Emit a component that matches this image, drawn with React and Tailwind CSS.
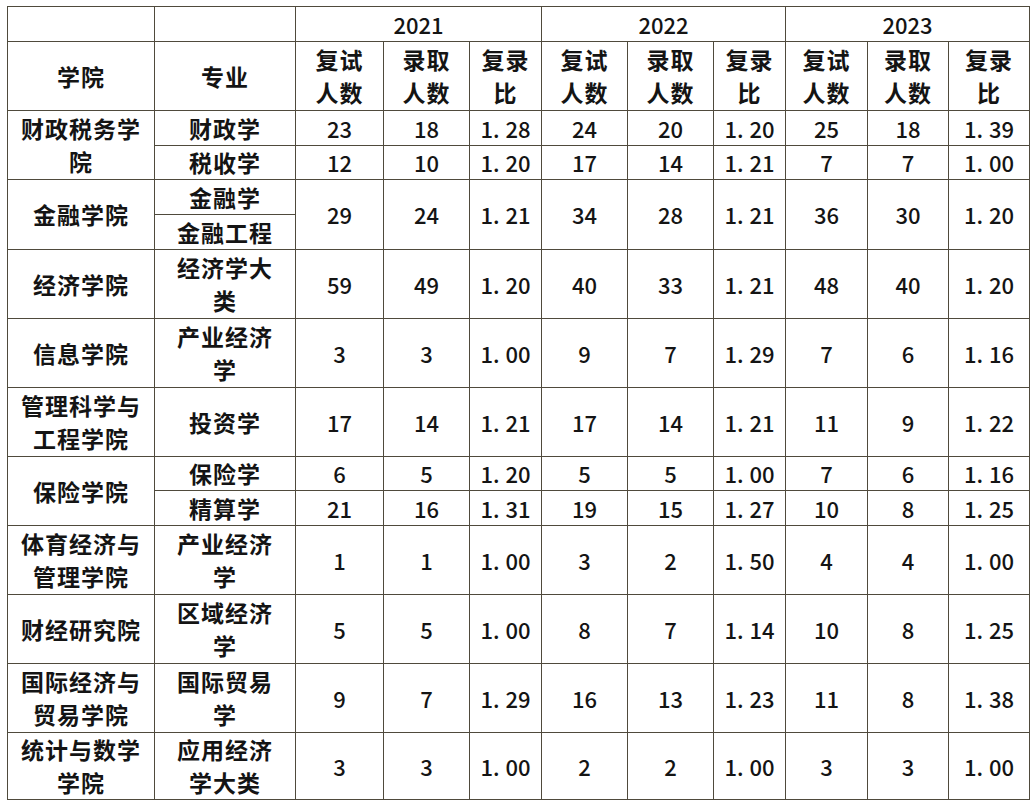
const rows = [
    { college: ['财政税务学', '院'], span: 2, major: ['财政学'], h: 'h-[35px]', d: ['23', '18', '1.28', '24', '20', '1.20', '25', '18', '1.39'] },
    { major: ['税收学'], h: 'h-[34px]', d: ['12', '10', '1.20', '17', '14', '1.21', '7', '7', '1.00'] },
    { college: ['金融学院'], span: 2, major: ['金融学'], h: 'h-[35px]', d: ['29', '24', '1.21', '34', '28', '1.21', '36', '30', '1.20'], dspan: 2 },
    { major: ['金融工程'], h: 'h-[35px]', d: [] },
    { college: ['经济学院'], major: ['经济学大', '类'], h: 'h-[69px]', d: ['59', '49', '1.20', '40', '33', '1.21', '48', '40', '1.20'] },
    { college: ['信息学院'], major: ['产业经济', '学'], h: 'h-[69px]', d: ['3', '3', '1.00', '9', '7', '1.29', '7', '6', '1.16'] },
    { college: ['管理科学与', '工程学院'], major: ['投资学'], h: 'h-[69px]', d: ['17', '14', '1.21', '17', '14', '1.21', '11', '9', '1.22'] },
    { college: ['保险学院'], span: 2, major: ['保险学'], h: 'h-[34px]', d: ['6', '5', '1.20', '5', '5', '1.00', '7', '6', '1.16'] },
    { major: ['精算学'], h: 'h-[35px]', d: ['21', '16', '1.31', '19', '15', '1.27', '10', '8', '1.25'] },
    { college: ['体育经济与', '管理学院'], major: ['产业经济', '学'], h: 'h-[69px]', d: ['1', '1', '1.00', '3', '2', '1.50', '4', '4', '1.00'] },
    { college: ['财经研究院'], major: ['区域经济', '学'], h: 'h-[69px]', d: ['5', '5', '1.00', '8', '7', '1.14', '10', '8', '1.25'] },
    { college: ['国际经济与', '贸易学院'], major: ['国际贸易', '学'], h: 'h-[69px]', d: ['9', '7', '1.29', '16', '13', '1.23', '11', '8', '1.38'] },
    { college: ['统计与数学', '学院'], major: ['应用经济', '学大类'], h: 'h-[66px]', d: ['3', '3', '1.00', '2', '2', '1.00', '3', '3', '1.00'] },
]

// 中文单元格 / 数字单元格
const cell = "border border-[#4f4a3c] text-center align-middle p-0 leading-[33px]"
const zh = `${cell} text-[23px] tracking-[1px] font-semibold`
const num = `${cell} text-[22px] font-medium`

const Lines = ({ lines }) => lines.map((l, i) => <div key={i}>{l}</div>)

const Num = ({ v }) => {
    if (!v.includes('.')) return v
    const [a, b] = v.split('.')
    return <span>{a}.<span className="ml-[6px]">{b}</span></span>
}

export default function App() {
    return (
        <div className="bg-white w-[1035px] h-[800px] overflow-hidden pt-[6px] pl-[7px] text-[#141414]" style={{ fontFamily: '"Noto Sans CJK SC", "Noto Sans", sans-serif' }}>
            <table className="table-fixed border-collapse w-[1022px]">
                <colgroup>
                    <col className="w-[147px]" />
                    <col className="w-[141px]" />
                    <col className="w-[88px]" />
                    <col className="w-[86px]" />
                    <col className="w-[72px]" />
                    <col className="w-[86px]" />
                    <col className="w-[86px]" />
                    <col className="w-[72px]" />
                    <col className="w-[82px]" />
                    <col className="w-[81px]" />
                    <col className="w-[81px]" />
                </colgroup>
                <thead>
                    <tr className="h-[35px]">
                        <td className={zh}></td>
                        <td className={zh}></td>
                        <td className={num} colSpan={3}>2021</td>
                        <td className={num} colSpan={3}>2022</td>
                        <td className={num} colSpan={3}>2023</td>
                    </tr>
                    <tr className="h-[69px]">
                        <td className={zh}>学院</td>
                        <td className={zh}>专业</td>
                        {[0, 1, 2].map(y => (
                            [['复试', '人数'], ['录取', '人数'], ['复录', '比']].map((h, j) => (
                                <td key={`${y}-${j}`} className={zh}><Lines lines={h} /></td>
                            ))
                        ))}
                    </tr>
                </thead>
                <tbody>
                    {rows.map((r, i) => (
                        <tr key={i} className={r.h}>
                            {r.college && (
                                <td className={zh} rowSpan={r.span || 1}><Lines lines={r.college} /></td>
                            )}
                            <td className={zh}><Lines lines={r.major} /></td>
                            {r.d.map((v, j) => (
                                <td key={j} className={num} rowSpan={r.dspan || 1}><Num v={v} /></td>
                            ))}
                        </tr>
                    ))}
                </tbody>
            </table>
        </div>
    )
}
